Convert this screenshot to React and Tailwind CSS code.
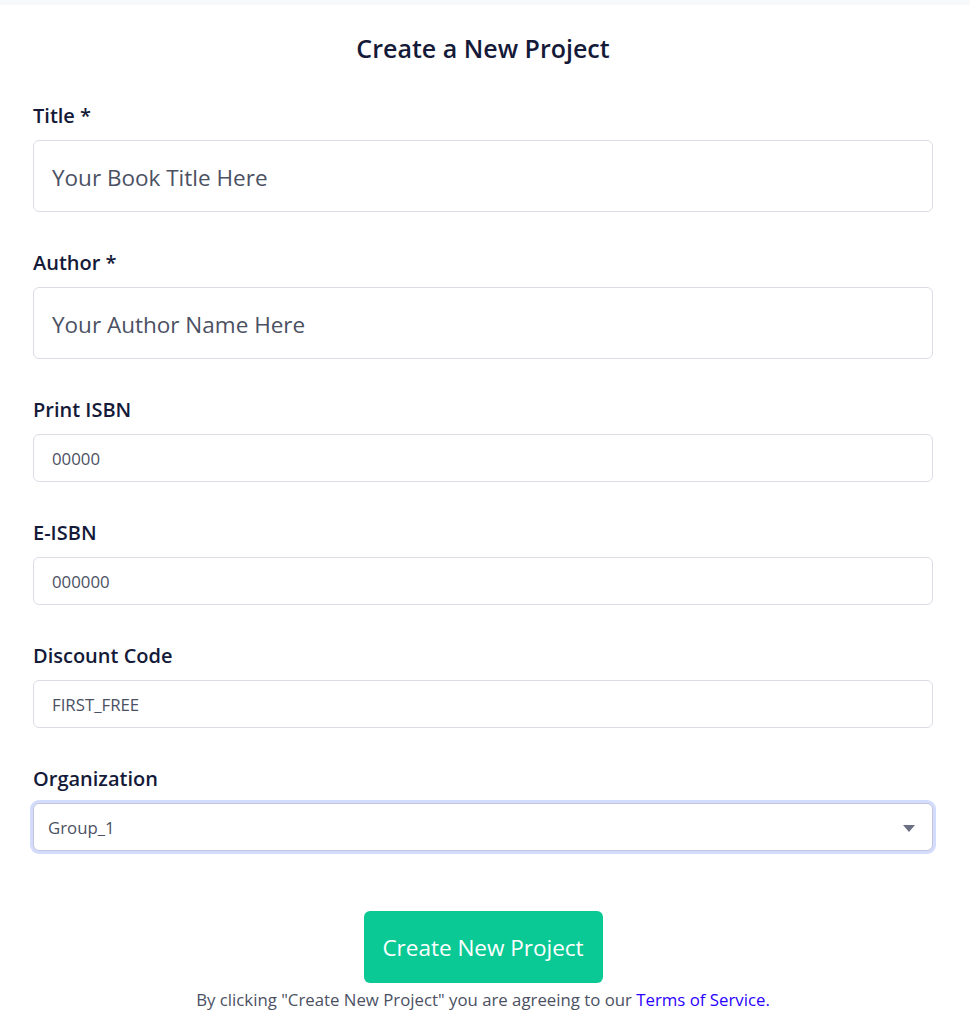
import React from "react";

const font = { fontFamily: '"Segoe UI", "Open Sans", "Noto Sans", sans-serif' };

function Field({ label, placeholder, big, first }) {
  return (
    <div className={first ? "" : "mt-[37px]"}>
      <label className="block text-[20px] leading-[28px] font-semibold text-[#141a38] mb-[10px]">{label}</label>
      <input
        placeholder={placeholder}
        className={
          "block w-full rounded-[6px] border border-[#dcdce6] bg-white outline-none text-[#4b5163] placeholder:text-[#4b5163] " +
          (big ? "h-[72px] px-[18px] pt-[3px] text-[22.5px]" : "h-[48px] px-[18px] pt-[1px] text-[16.8px]")
        }
      />
    </div>
  );
}

export default function App() {
  return (
    <div className="min-h-screen bg-white" style={font}>
      <div className="h-[5px] bg-[#f8f9fb]" />
      <div className="px-[33px] pr-[37px]">
        <h1 className="mt-[27px] text-center text-[25px] leading-[32px] font-semibold text-[#141a38]">Create a New Project</h1>
        <div className="mt-[38px]">
          <Field first label="Title *" placeholder="Your Book Title Here" big />
          <Field label="Author *" placeholder="Your Author Name Here" big />
          <Field label="Print ISBN" placeholder="00000" />
          <Field label="E-ISBN" placeholder="000000" />
          <Field label="Discount Code" placeholder="FIRST_FREE" />
          <div className="mt-[37px]">
            <label className="block text-[20px] leading-[28px] font-semibold text-[#141a38] mb-[10px]">Organization</label>
            <div className="relative h-[48px] rounded-[6px] border border-[#c2c5dd] ring-[3px] ring-[#d3dcfb] bg-white flex items-center px-[14px] pt-[1px]">
              <span className="text-[16.8px] text-[#4b5163]">Group_1</span>
              <svg className="absolute right-[17px] top-[21px]" width="12" height="7" viewBox="0 0 12 7">
                <path d="M0 0 L12 0 L6 7 Z" fill="#6b6f82" />
              </svg>
            </div>
          </div>
        </div>
        <div className="mt-[60px] flex flex-col items-center">
          <button className="h-[72px] w-[239px] rounded-[6px] bg-[#0ac995] text-white text-[22.5px] pt-[2px]">Create New Project</button>
          <p className="mt-[5px] text-[16.8px] leading-[24px] text-[#4b5163]">
            By clicking "Create New Project" you are agreeing to our <a className="text-[#2a00ff]">Terms of Service.</a>
          </p>
        </div>
      </div>
    </div>
  );
}
